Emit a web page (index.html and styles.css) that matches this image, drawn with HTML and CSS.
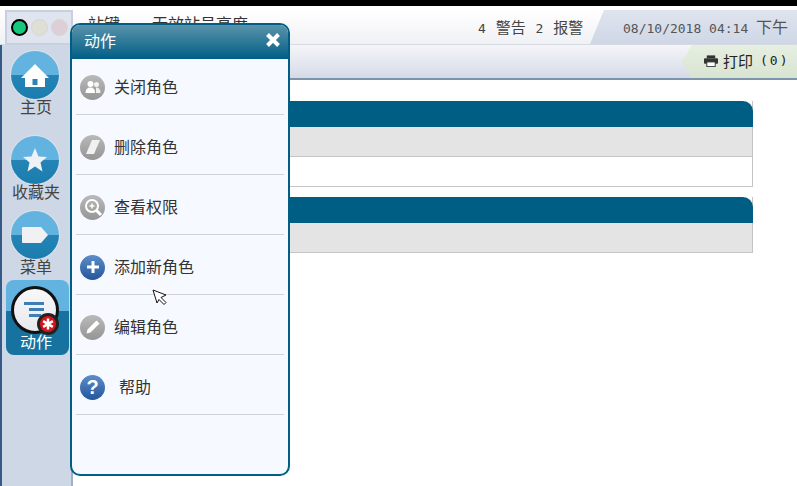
FILE: index.html
```html
<!DOCTYPE html>
<html lang="zh-CN">

<head>
    <meta charset="UTF-8" />
    <title>动作</title>
    <link rel="stylesheet" href="styles.css">
</head>

<body>
    <div class="screen">
        <div class="topbar">
            <div class="lights">
                <span class="light light-green"></span>
                <span class="light light-yellow"></span>
                <span class="light light-red"></span>
            </div>
            <div class="title">站键　　无效站号高度</div>
            <div class="alerts">4 <span class="cjk">警告</span> 2 <span class="cjk">报警</span></div>
            <div class="clock">08/10/2018 04:14 <span class="cjk-big">下午</span></div>
        </div>

        <div class="main">
            <div class="rail">
                <div class="nav-item">
                    <span class="nav-ball">
                        <svg width="30" height="30" viewBox="0 0 30 30">
                            <path d="M15 4 L29 18 H25 V27 H5 V18 H1 Z" fill="#fff" />
                            <rect x="12.500" y="19" width="5" height="6" fill="#2b83b5" />
                        </svg>
                    </span>
                    <span class="nav-label">主页</span>
                </div>
                <div class="nav-item">
                    <span class="nav-ball">
                        <svg width="26" height="26" viewBox="0 0 26 26">
                            <path d="M13 1 L16.500 9.500 L25 10 L18.500 15.500 L20.500 24.500 L13 19.500 L5.500 24.500 L7.500 15.500 L1 10 L9.500 9.500 Z" fill="#eef1f5" />
                        </svg>
                    </span>
                    <span class="nav-label">收藏夹</span>
                </div>
                <div class="nav-item">
                    <span class="nav-ball">
                        <svg width="28" height="18" viewBox="0 0 28 18">
                            <path d="M2 1 H20 L27 9 L20 17 H2 Q1 17 1 16 V2 Q1 1 2 1 Z" fill="#f1f1f3" />
                        </svg>
                    </span>
                    <span class="nav-label">菜单</span>
                </div>
                <div class="nav-item nav-active">
                    <span class="nav-ball nav-ball-white">
                        <svg width="24" height="22" viewBox="0 0 24 22">
                            <rect x="1" y="3" width="20" height="3" fill="#3f7db5" />
                            <rect x="6" y="9" width="15" height="3" fill="#3f7db5" />
                            <rect x="6" y="15" width="12" height="3" fill="#3f7db5" />
                        </svg>
                    </span>
                    <span class="badge">
                        <svg width="12" height="12" viewBox="0 0 12 12">
                            <path d="M6 0.500 V11.500 M1.200 3.200 L10.800 8.800 M10.800 3.200 L1.200 8.800" stroke="#fff" stroke-width="2.500" />
                        </svg>
                    </span>
                    <span class="nav-label">动作</span>
                </div>
            </div>

            <div class="content">
                <div class="toolbar">
                    <div class="print">
                        <svg width="14" height="12" viewBox="0 0 15 12">
                            <rect x="3" y="0" width="9" height="3" fill="#333" />
                            <rect x="0" y="3" width="15" height="6" rx="1" fill="#333" />
                            <rect x="3" y="7" width="9" height="5" fill="#fff" stroke="#333" />
                        </svg>
                        <span>打印</span>
                        <span class="print-count">(0)</span>
                    </div>
                </div>
                <div class="cards">
                    <div class="card">
                        <div class="card-head"></div>
                        <div class="card-sub"></div>
                        <div class="card-row"></div>
                    </div>
                    <div class="card">
                        <div class="card-head"></div>
                        <div class="card-sub"></div>
                    </div>
                </div>
            </div>
        </div>

        <div class="panel">
            <div class="panel-head">
                <span>动作</span>
                <svg width="16" height="16" viewBox="0 0 16 16">
                    <path d="M2.500 2.500 L13.500 13.500 M13.500 2.500 L2.500 13.500" stroke="#fff" stroke-width="4" />
                </svg>
            </div>
            <div class="panel-list">
                <div class="action">
                    <span class="icon icon-grey">
                        <svg width="18" height="18" viewBox="0 0 18 18" fill="#fff">
                            <circle cx="6.500" cy="6" r="3" />
                            <path d="M1.500 15 Q1.500 9.500 6.500 9.500 Q11 9.500 11 15 Z" />
                            <circle cx="12.500" cy="6.500" r="2.500" opacity="0.85" />
                            <path d="M12 15 Q12 10 12 9.500 Q16.500 9.500 16.500 15 Z" opacity="0.85" />
                        </svg>
                    </span>
                    <span class="action-text">关闭角色</span>
                </div>
                <div class="action">
                    <span class="icon icon-grey">
                        <svg width="18" height="18" viewBox="0 0 18 18">
                            <path d="M8 2 H16 L10 16 H2 Z" fill="#f1f1f1" />
                        </svg>
                    </span>
                    <span class="action-text">删除角色</span>
                </div>
                <div class="action">
                    <span class="icon icon-grey">
                        <svg width="20" height="20" viewBox="0 0 20 20" fill="none" stroke="#fff">
                            <circle cx="9" cy="9" r="6" stroke-width="2" />
                            <path d="M13 13 L18 18" stroke-width="3" />
                            <path d="M6.500 9 H11.500 M9 6.500 V11.500" stroke-width="1.500" />
                        </svg>
                    </span>
                    <span class="action-text">查看权限</span>
                </div>
                <div class="action">
                    <span class="icon icon-blue">
                        <svg width="14" height="14" viewBox="0 0 14 14">
                            <path d="M7 1 V13 M1 7 H13" stroke="#fff" stroke-width="3" />
                        </svg>
                    </span>
                    <span class="action-text">添加新角色</span>
                </div>
                <div class="action">
                    <span class="icon icon-grey">
                        <svg width="18" height="18" viewBox="0 0 18 18" fill="#fff">
                            <path d="M12.500 2.500 L15.500 5.500 L6.500 14.500 L2.500 15.500 L3.500 11.500 Z" />
                        </svg>
                    </span>
                    <span class="action-text">编辑角色</span>
                </div>
                <div class="action action-help">
                    <span class="icon icon-blue icon-help">?</span>
                    <span class="action-text">帮助</span>
                </div>
            </div>
        </div>

        <svg class="cursor" width="16" height="17" viewBox="0 0 16 17">
            <path d="M1 1 L14 6 L9 8.500 L14 13.500 L12 15.500 L7 10.500 L5 14 Z" fill="#fff" stroke="#111" />
        </svg>
    </div>
</body>

</html>
```

FILE: styles.css
```css
* {
    box-sizing: border-box;
}

body {
    margin: 0;
    background: #fff;
    font-family: "Liberation Sans", "Noto Sans CJK SC", sans-serif;
    color: #333;
}

.screen {
    position: relative;
    width: 797px;
    height: 486px;
    overflow: hidden;
    border-top: 6px solid #000;
    display: flex;
    flex-direction: column;
}

.topbar {
    height: 39px;
    display: flex;
    flex: none;
    background: linear-gradient(#fff 10%, #f0f1f5);
    border-bottom: 1px solid #d5dae3;
    padding-left: 5px;
}

.lights {
    width: 68px;
    height: 35px;
    margin-top: 4px;
    display: flex;
    flex: none;
    align-items: center;
    gap: 3px;
    padding-left: 4px;
    background: #dfe4ee;
    border: 2px solid #c6d0e0;
}

.light {
    width: 17px;
    height: 17px;
    border-radius: 50%;
    flex: none;
}

.light-green {
    background: #18c67c;
    border: 2px solid #000;
}

.light-yellow {
    background: #dfdfd6;
    border: 1px solid #d5d6d8;
}

.light-red {
    background: #dcd0d6;
    border: 1px solid #d5d6d8;
}

.title {
    width: 399px;
    flex: none;
    padding: 11px 0 0 15px;
    font-size: 16px;
    line-height: 16px;
    white-space: nowrap;
}

.alerts {
    width: 118px;
    flex: none;
    padding: 14px 0 0 6px;
    font-family: "DejaVu Sans Mono", "Noto Sans CJK SC", monospace;
    font-size: 13px;
    line-height: 16px;
    word-spacing: 2px;
    white-space: nowrap;
    color: #444;
}

.cjk {
    font-size: 15px;
}

.clock {
    flex: 1;
    margin-top: 4px;
    padding: 10px 0 0 33px;
    font-family: "DejaVu Sans Mono", "Noto Sans CJK SC", monospace;
    font-size: 13px;
    line-height: 16px;
    white-space: nowrap;
    color: #555;
    background: linear-gradient(#dfe4ee, #cfd7e6);
    clip-path: polygon(14px 0, 100% 0, 100% 100%, 0 100%);
}

.cjk-big {
    font-size: 16px;
}

.main {
    flex: 1;
    display: flex;
    min-height: 0;
}

.rail {
    width: 73px;
    flex: none;
    padding: 6px 0 0 9px;
    background: #cdd7e6;
    border-left: 2px solid #345a85;
    border-right: 2px solid #9fb0c6;
    display: flex;
    flex-direction: column;
}

.nav-item {
    position: relative;
    width: 48px;
    height: 75px;
    flex: none;
    display: flex;
    flex-direction: column;
    align-items: center;
    font-size: 16px;
    line-height: 18px;
    color: #444;
}

.nav-item:nth-child(1) {
    height: 85px;
}

.nav-item:nth-child(3) {
    height: 69px;
}

.nav-label {
    margin-left: 2px;
    white-space: nowrap;
}

.nav-ball {
    width: 48px;
    height: 48px;
    flex: none;
    border-radius: 50%;
    display: flex;
    align-items: center;
    justify-content: center;
    background: linear-gradient(#62b3df 50%, #2484b6 50%, #1b7cae);
    box-shadow: 0 0 0 1px #dde3ec;
}

.nav-active {
    color: #fff;
    width: 63px;
    margin-left: -5px;
    padding: 0 10px 0 5px;
    border-radius: 8px;
    background: linear-gradient(#62b3df 41%, #17729f 41%);
}

.nav-active .nav-ball {
    margin-top: 6px;
}

.nav-ball-white {
    background: linear-gradient(#f8f8fa, #e8e9ee);
    border: 3px solid #111;
    box-shadow: none;
}

.badge {
    position: absolute;
    left: 31px;
    top: 33px;
    width: 22px;
    height: 22px;
    border-radius: 50%;
    background: #d2161b;
    border: 3px solid #222;
    display: flex;
    align-items: center;
    justify-content: center;
}

.content {
    flex: 1;
    display: flex;
    flex-direction: column;
}

.toolbar {
    height: 35px;
    flex: none;
    display: flex;
    justify-content: flex-end;
    background: linear-gradient(#f5f5f9, #d5dbe7);
    border-bottom: 2px solid #7d94ad;
}

.print {
    width: 115px;
    display: flex;
    align-items: center;
    gap: 5px;
    padding: 0 0 2px 22px;
    font-size: 15px;
    color: #222;
    background: linear-gradient(#e6efe1, #d8e4d2);
    clip-path: polygon(10px 0, 100% 0, 100% 100%, 10px 100%, 0 50%);
}

.print-count {
    margin-left: 2px;
    font-family: "DejaVu Sans Mono", monospace;
    font-size: 13px;
    letter-spacing: 2px;
    white-space: nowrap;
}

.cards {
    padding: 21px 44px 0 0;
    display: flex;
    flex-direction: column;
    align-items: flex-end;
    gap: 10px;
}

.card {
    width: 500px;
    border-right: 1px solid #c4c4c4;
    border-bottom: 1px solid #c4c4c4;
    background: #fff;
}

.card-head {
    height: 26px;
    background: #005e85;
    border-radius: 0 10px 0 0;
    margin-right: -1px;
}

.card-sub {
    height: 29px;
    background: #e4e4e4;
}

.card-row {
    height: 30px;
    border-top: 1px solid #c4c4c4;
}

.panel {
    position: absolute;
    left: 70px;
    top: 17px;
    width: 220px;
    height: 453px;
    background: #f6f9ff;
    border: 2px solid #005e85;
    border-radius: 10px;
    overflow: hidden;
}

.panel-head {
    height: 34px;
    display: flex;
    align-items: center;
    justify-content: space-between;
    padding: 0 7px 4px 12px;
    color: #fff;
    font-size: 16px;
    background: linear-gradient(#5a93ab, #005e85);
}

.panel-list {
    padding: 0 4px;
}

.action {
    height: 60px;
    display: flex;
    align-items: center;
    gap: 9px;
    padding: 5px 0 0 4px;
    border-bottom: 1px solid #cfd2d6;
    font-size: 16px;
    color: #333;
}

.action:first-child {
    height: 56px;
    padding-top: 1px;
}

.action-text {
    padding-bottom: 2px;
}

.action-help {
    gap: 14px;
}

.icon {
    width: 25px;
    height: 25px;
    flex: none;
    border-radius: 50%;
    display: flex;
    align-items: center;
    justify-content: center;
}

.icon-grey {
    background: linear-gradient(#b9b9b9, #959595);
}

.icon-blue {
    background: linear-gradient(#5d8ec9, #23569c);
}

.icon-help {
    color: #fff;
    font-size: 20px;
    font-weight: bold;
}

.cursor {
    position: absolute;
    left: 152px;
    top: 283px;
}
```
